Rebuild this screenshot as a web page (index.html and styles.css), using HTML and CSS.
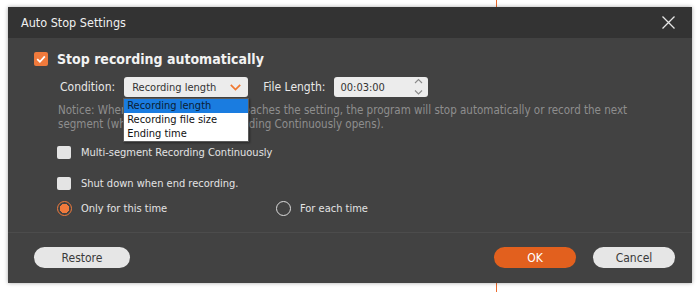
FILE: index.html
```html
<!DOCTYPE html>
<html lang="en">
<head>
<meta charset="UTF-8" />
<meta name="viewport" content="width=device-width, initial-scale=1" />
<title>Auto Stop Settings</title>
<link rel="stylesheet" href="styles.css">
</head>
<body>

<div class="dialog">
  <div class="titlebar">
    <span class="title">Auto Stop Settings</span>
    <svg class="close" width="13" height="13" viewBox="0 0 13 13">
      <path d="M0.5 0.5 L12.5 12.5 M12.5 0.5 L0.5 12.5" stroke="#e6e6e6" stroke-width="1.3" fill="none" />
    </svg>
  </div>

  <div class="content">
    <label class="main-check">
      <span class="box checked">
        <svg width="14" height="14" viewBox="0 0 14 14">
          <path d="M3.2 7.2 L5.9 9.8 L10.8 4.4" stroke="#fff" stroke-width="1.8" fill="none" />
        </svg>
      </span>
      Stop recording automatically
    </label>

    <div class="condition-row">
      <span class="field-label">Condition:</span>
      <div class="select">
        <span>Recording length</span>
        <svg class="chevron" width="11" height="7" viewBox="0 0 11 7">
          <path d="M0.8 0.8 L5.5 5.6 L10.2 0.8" stroke="#f07830" stroke-width="1.7" fill="none" />
        </svg>
        <ul class="options">
          <li class="active">Recording length</li>
          <li>Recording file size</li>
          <li>Ending time</li>
        </ul>
      </div>
      <span class="field-label file-len">File Length:</span>
      <div class="time">
        <span>00:03:00</span>
        <svg class="spin" width="9" height="20" viewBox="0 0 9 20">
          <path d="M1 6 L4.5 2.5 L8 6 M1 13.5 L4.5 17 L8 13.5" stroke="#8a8a8a" stroke-width="1.1" fill="none" />
        </svg>
      </div>
    </div>

    <p class="notice">Notice: When the recording length reaches the setting, the program will stop automatically or record the next segment (when Multi-segment Recording Continuously opens).</p>

    <label class="check multi"><span class="box"></span>Multi-segment Recording Continuously</label>
    <label class="check shut"><span class="box"></span>Shut down when end recording.</label>

    <div class="radios">
      <label class="radio first"><span class="dot on"></span>Only for this time</label>
      <label class="radio"><span class="dot"></span>For each time</label>
    </div>
  </div>

  <div class="footer">
    <button class="btn">Restore</button>
    <div class="right">
      <button class="btn primary">OK</button>
      <button class="btn">Cancel</button>
    </div>
  </div>
</div>

</body>
</html>
```

FILE: styles.css
```css
html, body {
  margin: 0;
  height: 292px;
  overflow: hidden;
}
body {
  background: #fff linear-gradient(to right, transparent 496px, #ec6a2c 496px, #ec6a2c 497px, transparent 497px);
  font-family: "DejaVu Sans Condensed", "DejaVu Sans", sans-serif;
  font-size: 11px;
  padding-top: 7px;
  box-sizing: border-box;
}
.dialog {
  margin-left: 8px;
  width: 684px;
  height: 276px;
  background: #424242;
  box-shadow: 0 0 4px rgba(0, 0, 0, 0.35);
  display: flex;
  flex-direction: column;
  color: #e8e8e8;
}
.titlebar {
  height: 31px;
  background: #333333;
  display: flex;
  align-items: center;
  justify-content: space-between;
  padding: 0 17px 0 13px;
}
.title {
  font-size: 12.5px;
  color: #f0f0f0;
}
.content {
  height: 194px;
  padding-left: 26px;
  box-sizing: border-box;
}
.main-check {
  display: flex;
  align-items: center;
  height: 20px;
  margin-top: 11px;
  font-size: 14px;
  font-weight: bold;
  color: #f2f2f2;
  gap: 9px;
}
.box {
  width: 14px;
  height: 14px;
  border-radius: 2px;
  background: #e4e4e4;
  display: inline-block;
  flex: none;
}
.box.checked {
  background: #f07a3c;
}
.box svg {
  display: block;
}
.condition-row {
  display: flex;
  align-items: center;
  height: 20px;
  margin-top: 8px;
  padding-left: 26px;
}
.field-label {
  font-size: 12px;
  color: #e8e8e8;
  margin-right: 9px;
}
.file-len {
  margin-left: 15px;
}
.select, .time {
  position: relative;
  height: 20px;
  background: #ececec;
  border-radius: 3px;
  color: #333;
  display: flex;
  align-items: center;
  justify-content: space-between;
  box-sizing: border-box;
}
.select {
  width: 124px;
  padding: 0 7px 0 8px;
}
.time {
  width: 94px;
  padding: 0 5px 0 6px;
}
.options {
  position: absolute;
  top: 21px;
  left: -1px;
  width: 126px;
  margin: 0;
  padding: 0;
  list-style: none;
  background: #fff;
  border: 1px solid #5a5a5a;
  box-sizing: border-box;
  box-shadow: 1px 1px 2px rgba(0, 0, 0, 0.4);
  z-index: 2;
}
.options li {
  height: 14px;
  line-height: 14px;
  padding-left: 3px;
  color: #111;
  font-size: 11px;
}
.options li.active {
  background: #1a7ce0;
  color: #0b1c33;
}
.notice {
  margin: 6px 0 0 24px;
  width: 600px;
  line-height: 14px;
  font-size: 11.5px;
  color: #8e8e8e;
}
.check {
  display: flex;
  align-items: center;
  height: 14px;
  padding-left: 23px;
  gap: 10px;
  color: #e4e4e4;
}
.check .box {
  width: 14px;
  height: 13px;
}
.multi {
  margin-top: 14px;
}
.shut {
  margin-top: 17px;
}
.radios {
  display: flex;
  height: 15px;
  margin-top: 11px;
  padding-left: 23px;
}
.radio {
  display: flex;
  align-items: center;
  gap: 9px;
  color: #e4e4e4;
}
.radio.first {
  width: 219px;
}
.dot {
  width: 15px;
  height: 15px;
  border-radius: 50%;
  border: 1.5px solid #dcdcdc;
  box-sizing: border-box;
  flex: none;
}
.dot.on {
  border-color: #f07a3c;
  background: radial-gradient(circle, #f07a3c 0 4.5px, transparent 5px);
}
.footer {
  flex: 1;
  border-top: 1px solid #4c4c4c;
  display: flex;
  align-items: center;
  justify-content: space-between;
  padding: 0 17px 1px 26px;
}
.right {
  display: flex;
  gap: 17px;
}
.btn {
  height: 21px;
  border: none;
  border-radius: 11px;
  background: #e6e6e6;
  color: #3a3a3a;
  font-family: inherit;
  font-size: 12px;
  width: 96px;
  padding: 0;
}
.btn.primary {
  width: 82px;
  background: #e2601e;
  color: #fff;
}
.right .btn:last-child {
  width: 82px;
}
```
